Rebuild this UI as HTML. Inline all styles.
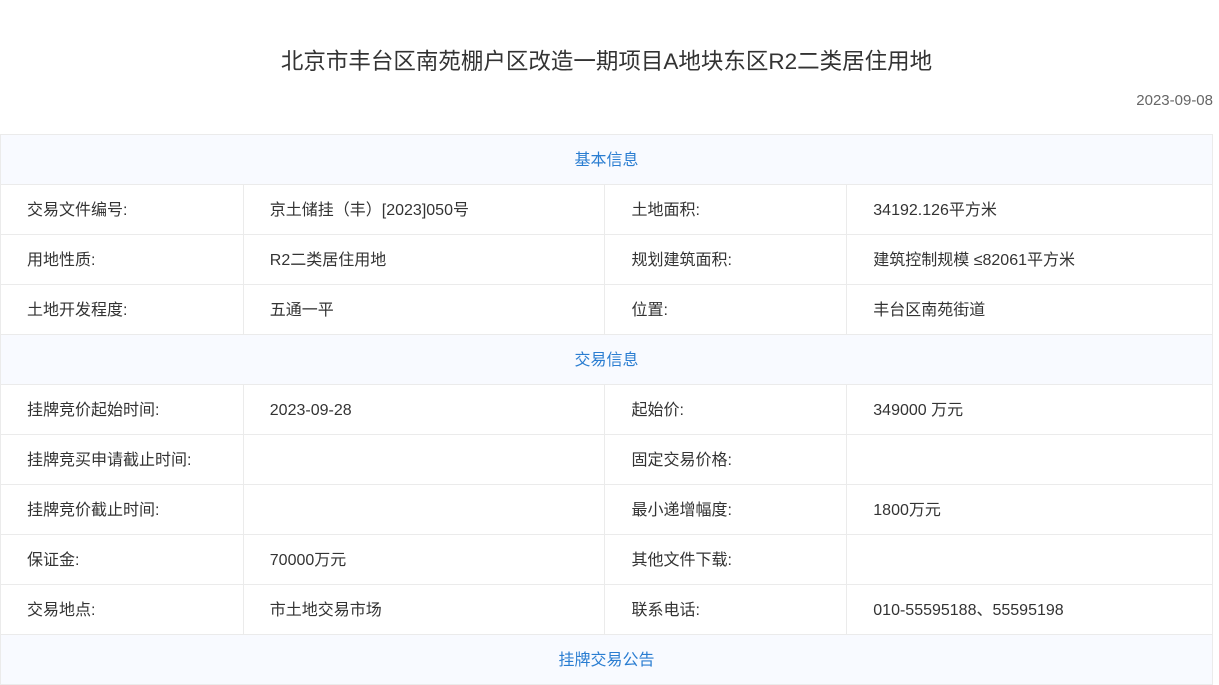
<!DOCTYPE html><html><head><meta charset="utf-8"><style>
body{margin:0;background:#fff;font-family:"Liberation Sans","Noto Sans CJK SC",sans-serif;color:#333;width:1219px;height:674px;overflow:hidden}
h1{margin:0;position:absolute;top:44px;left:0;width:1213px;text-align:center;font-size:22.5px;font-weight:normal;color:#333}
.date{position:absolute;top:92px;right:6px;font-size:15px;color:#666}
table{position:absolute;top:134px;left:0;width:1213px;border-collapse:collapse;font-size:16px}
td{border:1px solid #ebebeb;height:47px;padding:2px 0 0 26px;vertical-align:middle;line-height:20px}
td.h{background:#f8faff;text-align:center;color:#2a7dd1;padding:2px 0 0 0}
</style></head><body>
<h1>北京市丰台区南苑棚户区改造一期项目A地块东区R2二类居住用地</h1>
<div class="date">2023-09-08</div>
<table>
<colgroup><col style="width:243px"><col style="width:362px"><col style="width:242px"><col style="width:366px"></colgroup>
<tr><td class="h" colspan="4">基本信息</td></tr>
<tr><td>交易文件编号:</td><td>京土储挂（丰）[2023]050号</td><td>土地面积:</td><td>34192.126平方米</td></tr>
<tr><td>用地性质:</td><td>R2二类居住用地</td><td>规划建筑面积:</td><td>建筑控制规模 ≤82061平方米</td></tr>
<tr><td>土地开发程度:</td><td>五通一平</td><td>位置:</td><td>丰台区南苑街道</td></tr>
<tr><td class="h" colspan="4">交易信息</td></tr>
<tr><td>挂牌竞价起始时间:</td><td>2023-09-28</td><td>起始价:</td><td>349000 万元</td></tr>
<tr><td>挂牌竞买申请截止时间:</td><td></td><td>固定交易价格:</td><td></td></tr>
<tr><td>挂牌竞价截止时间:</td><td></td><td>最小递增幅度:</td><td>1800万元</td></tr>
<tr><td>保证金:</td><td>70000万元</td><td>其他文件下载:</td><td></td></tr>
<tr><td>交易地点:</td><td>市土地交易市场</td><td>联系电话:</td><td>010-55595188、55595198</td></tr>
<tr><td class="h" colspan="4">挂牌交易公告</td></tr>
</table>
</body></html>
